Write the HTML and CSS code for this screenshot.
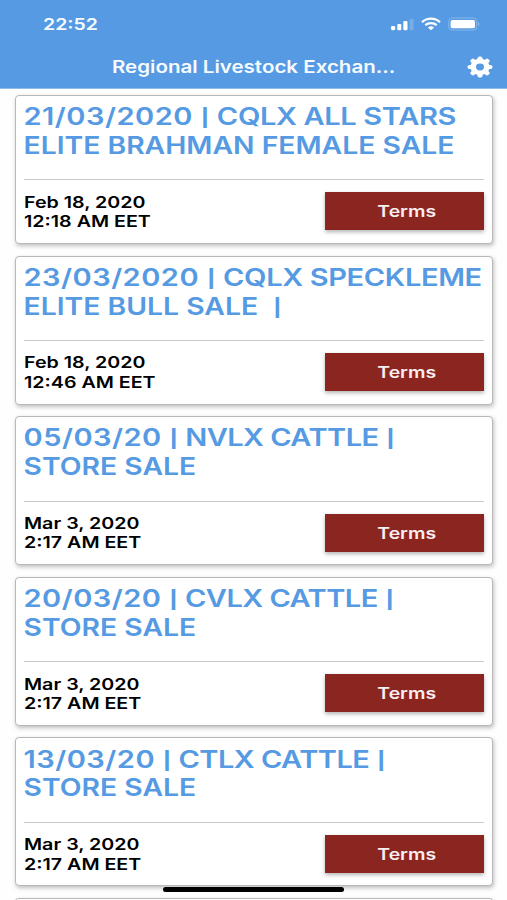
FILE: index.html
```
<!DOCTYPE html>
<html lang="en">
<head>
<meta charset="utf-8">
<title>Regional Livestock Exchange</title>
<link rel="stylesheet" href="styles.css">
</head>
<body>
<header class="header">
  <div class="status">
    <span class="time">22:52</span>
    <div class="indicators">
      <svg class="signal" width="24" height="14" viewBox="0 0 24 14" fill="#fff"><rect x="1" y="9" width="4.2" height="4.2" rx="1.4"/><rect x="7.3" y="7" width="4" height="6.2" rx="1"/><rect x="13.3" y="4" width="4.2" height="9.2" rx="1"/><rect x="19.6" y="2" width="4" height="11.2" rx="1" opacity=".2"/></svg>
      <svg class="wifi" width="20" height="14" viewBox="0 0 20 14" fill="none" stroke="#fff" stroke-width="2.2"><path d="M1 5.2C6 .4 14 .4 19 5.2"/><path d="M4.3 8.2C7.6 5.3 12.4 5.3 15.7 8.2"/><path d="M6.9 10.5Q10 8.1 13.1 10.5L10 13.2Z" fill="#fff" stroke="none"/></svg>
      <svg class="battery" width="33" height="14" viewBox="0 0 33 14"><rect x=".8" y="1" width="28" height="12" rx="3.5" fill="none" stroke="#fff" stroke-opacity=".3"/><rect x="2.6" y="2.9" width="24.4" height="8.4" rx="1.8" fill="#fff"/><path d="M30.3 5Q32.3 7 30.3 9Z" fill="#fff" fill-opacity=".45"/></svg>
    </div>
  </div>
  <div class="bar">
    <h1 class="heading">Regional Livestock Exchan...</h1>
    <svg class="gear" width="26" height="22" viewBox="-13 -11 26 22"><g transform="scale(1.17 1)"><g fill="#fff"><circle r="8.2"/><rect x="-2.1" y="-10.6" width="4.2" height="21.2" rx="1.7"/><rect x="-2.1" y="-10.6" width="4.2" height="21.2" rx="1.7" transform="rotate(45)"/><rect x="-2.1" y="-10.6" width="4.2" height="21.2" rx="1.7" transform="rotate(90)"/><rect x="-2.1" y="-10.6" width="4.2" height="21.2" rx="1.7" transform="rotate(135)"/></g><circle r="3.4" fill="#559ae2"/></g></svg>
  </div>
</header>
<main class="list">
  <article class="card">
    <h2 class="title"><span class="line wide"><span class="num">21/03/2020</span> <span class="pipe">|</span> CQLX ALL STARS</span><span class="line">ELITE BRAHMAN FEMALE SALE</span></h2>
    <div class="foot"><div class="date"><span>Feb 18, 2020</span><span>12:18 AM EET</span></div><button class="terms"><span>Terms</span></button></div>
  </article>
  <article class="card">
    <h2 class="title"><span class="line wide"><span class="num">23/03/2020</span> <span class="pipe">|</span> CQLX SPECKLEME</span><span class="line">ELITE BULL SALE &nbsp;<span class="pipe">|</span></span></h2>
    <div class="foot"><div class="date"><span>Feb 18, 2020</span><span>12:46 AM EET</span></div><button class="terms"><span>Terms</span></button></div>
  </article>
  <article class="card">
    <h2 class="title"><span class="line wide store"><span class="num">05/03/20</span> <span class="pipe">|</span> NVLX CATTLE <span class="pipe">|</span></span><span class="line">STORE SALE</span></h2>
    <div class="foot"><div class="date"><span>Mar 3, 2020</span><span>2:17 AM EET</span></div><button class="terms"><span>Terms</span></button></div>
  </article>
  <article class="card">
    <h2 class="title"><span class="line wide store"><span class="num">20/03/20</span> <span class="pipe">|</span> CVLX CATTLE <span class="pipe">|</span></span><span class="line">STORE SALE</span></h2>
    <div class="foot"><div class="date"><span>Mar 3, 2020</span><span>2:17 AM EET</span></div><button class="terms"><span>Terms</span></button></div>
  </article>
  <article class="card">
    <h2 class="title"><span class="line wide store"><span class="num">13/03/20</span> <span class="pipe">|</span> CTLX CATTLE <span class="pipe">|</span></span><span class="line">STORE SALE</span></h2>
    <div class="foot"><div class="date"><span>Mar 3, 2020</span><span>2:17 AM EET</span></div><button class="terms"><span>Terms</span></button></div>
  </article>
  <div class="card next"></div>
</main>
<div class="home"></div>
</body>
</html>
```
FILE: styles.css
```
* { box-sizing: border-box; }
body { margin: 0; height: 900px; overflow: hidden; background: #fefefe; font-family: Inter, "Liberation Sans", sans-serif; font-weight: 600; position: relative; }
.header { height: 89px; background: #559ae2; color: #f6fbff; border-bottom: 1px solid #8ebbea; }
.status { height: 46px; padding: 1px 26px 0 43px; display: flex; align-items: center; justify-content: space-between; }
.time { font-size: 16px; transform: scaleX(1.218); transform-origin: left; }
.indicators { display: flex; align-items: center; }
.wifi { margin-left: 7px; }
.battery { margin-left: 7px; }
.bar { height: 42px; display: grid; grid-template-columns: 112px 1fr 26px; align-items: center; padding-right: 14.5px; }
.heading { grid-column: 2; margin: 0; font-size: 17px; font-weight: 600; white-space: nowrap; transform: scaleX(1.207); transform-origin: left; justify-self: start; }
.gear { display: block; }
.list { height: 811px; overflow: hidden; padding: 6px 14.5px 0 15px; display: flex; flex-direction: column; gap: 11.6px; }
.card { height: 149px; flex: none; padding: 7.2px 7.7px 0 8px; background: #fff; border: 1.5px solid #b9b7b9; border-radius: 4px; box-shadow: 1px 2px 4px rgba(0, 0, 0, .25); }
.card.next { height: 4px; border-bottom: 0; border-radius: 4px 4px 0 0; }
.title { margin: 0; height: 77.2px; font-size: 24px; line-height: 28.8px; font-weight: 600; color: #559ae2; border-bottom: 1.5px solid #c9c9c9; }
.line { display: block; width: max-content; white-space: nowrap; transform: translateX(-.5px) scaleX(1.18); transform-origin: left; }
.line.wide { transform: translateX(-.5px) scaleX(1.21); letter-spacing: -.3px; }
.line.wide.store { letter-spacing: -.45px; }
.line .num, .line.store .num { letter-spacing: .4px; }
.pipe { display: inline-block; transform: translateY(1.5px) scaleY(.73); }
.foot { display: flex; justify-content: space-between; padding-top: 12.1px; }
.date { font-size: 16px; line-height: 19.4px; color: #000; padding-top: .4px; }
.date span { display: block; width: max-content; transform: scaleX(1.228); transform-origin: left; }
.terms { width: 159px; height: 38px; padding: 0; border: 0; background: #8b2520; color: #f8eeee; font: 600 16px Inter, "Liberation Sans", sans-serif; box-shadow: 0 2px 4px rgba(0, 0, 0, .3); }
.terms span { display: inline-block; transform: translateX(2.5px) scaleX(1.213); }
.home { position: absolute; left: 163px; top: 887px; width: 181px; height: 5px; border-radius: 3px; background: #000; }
```
